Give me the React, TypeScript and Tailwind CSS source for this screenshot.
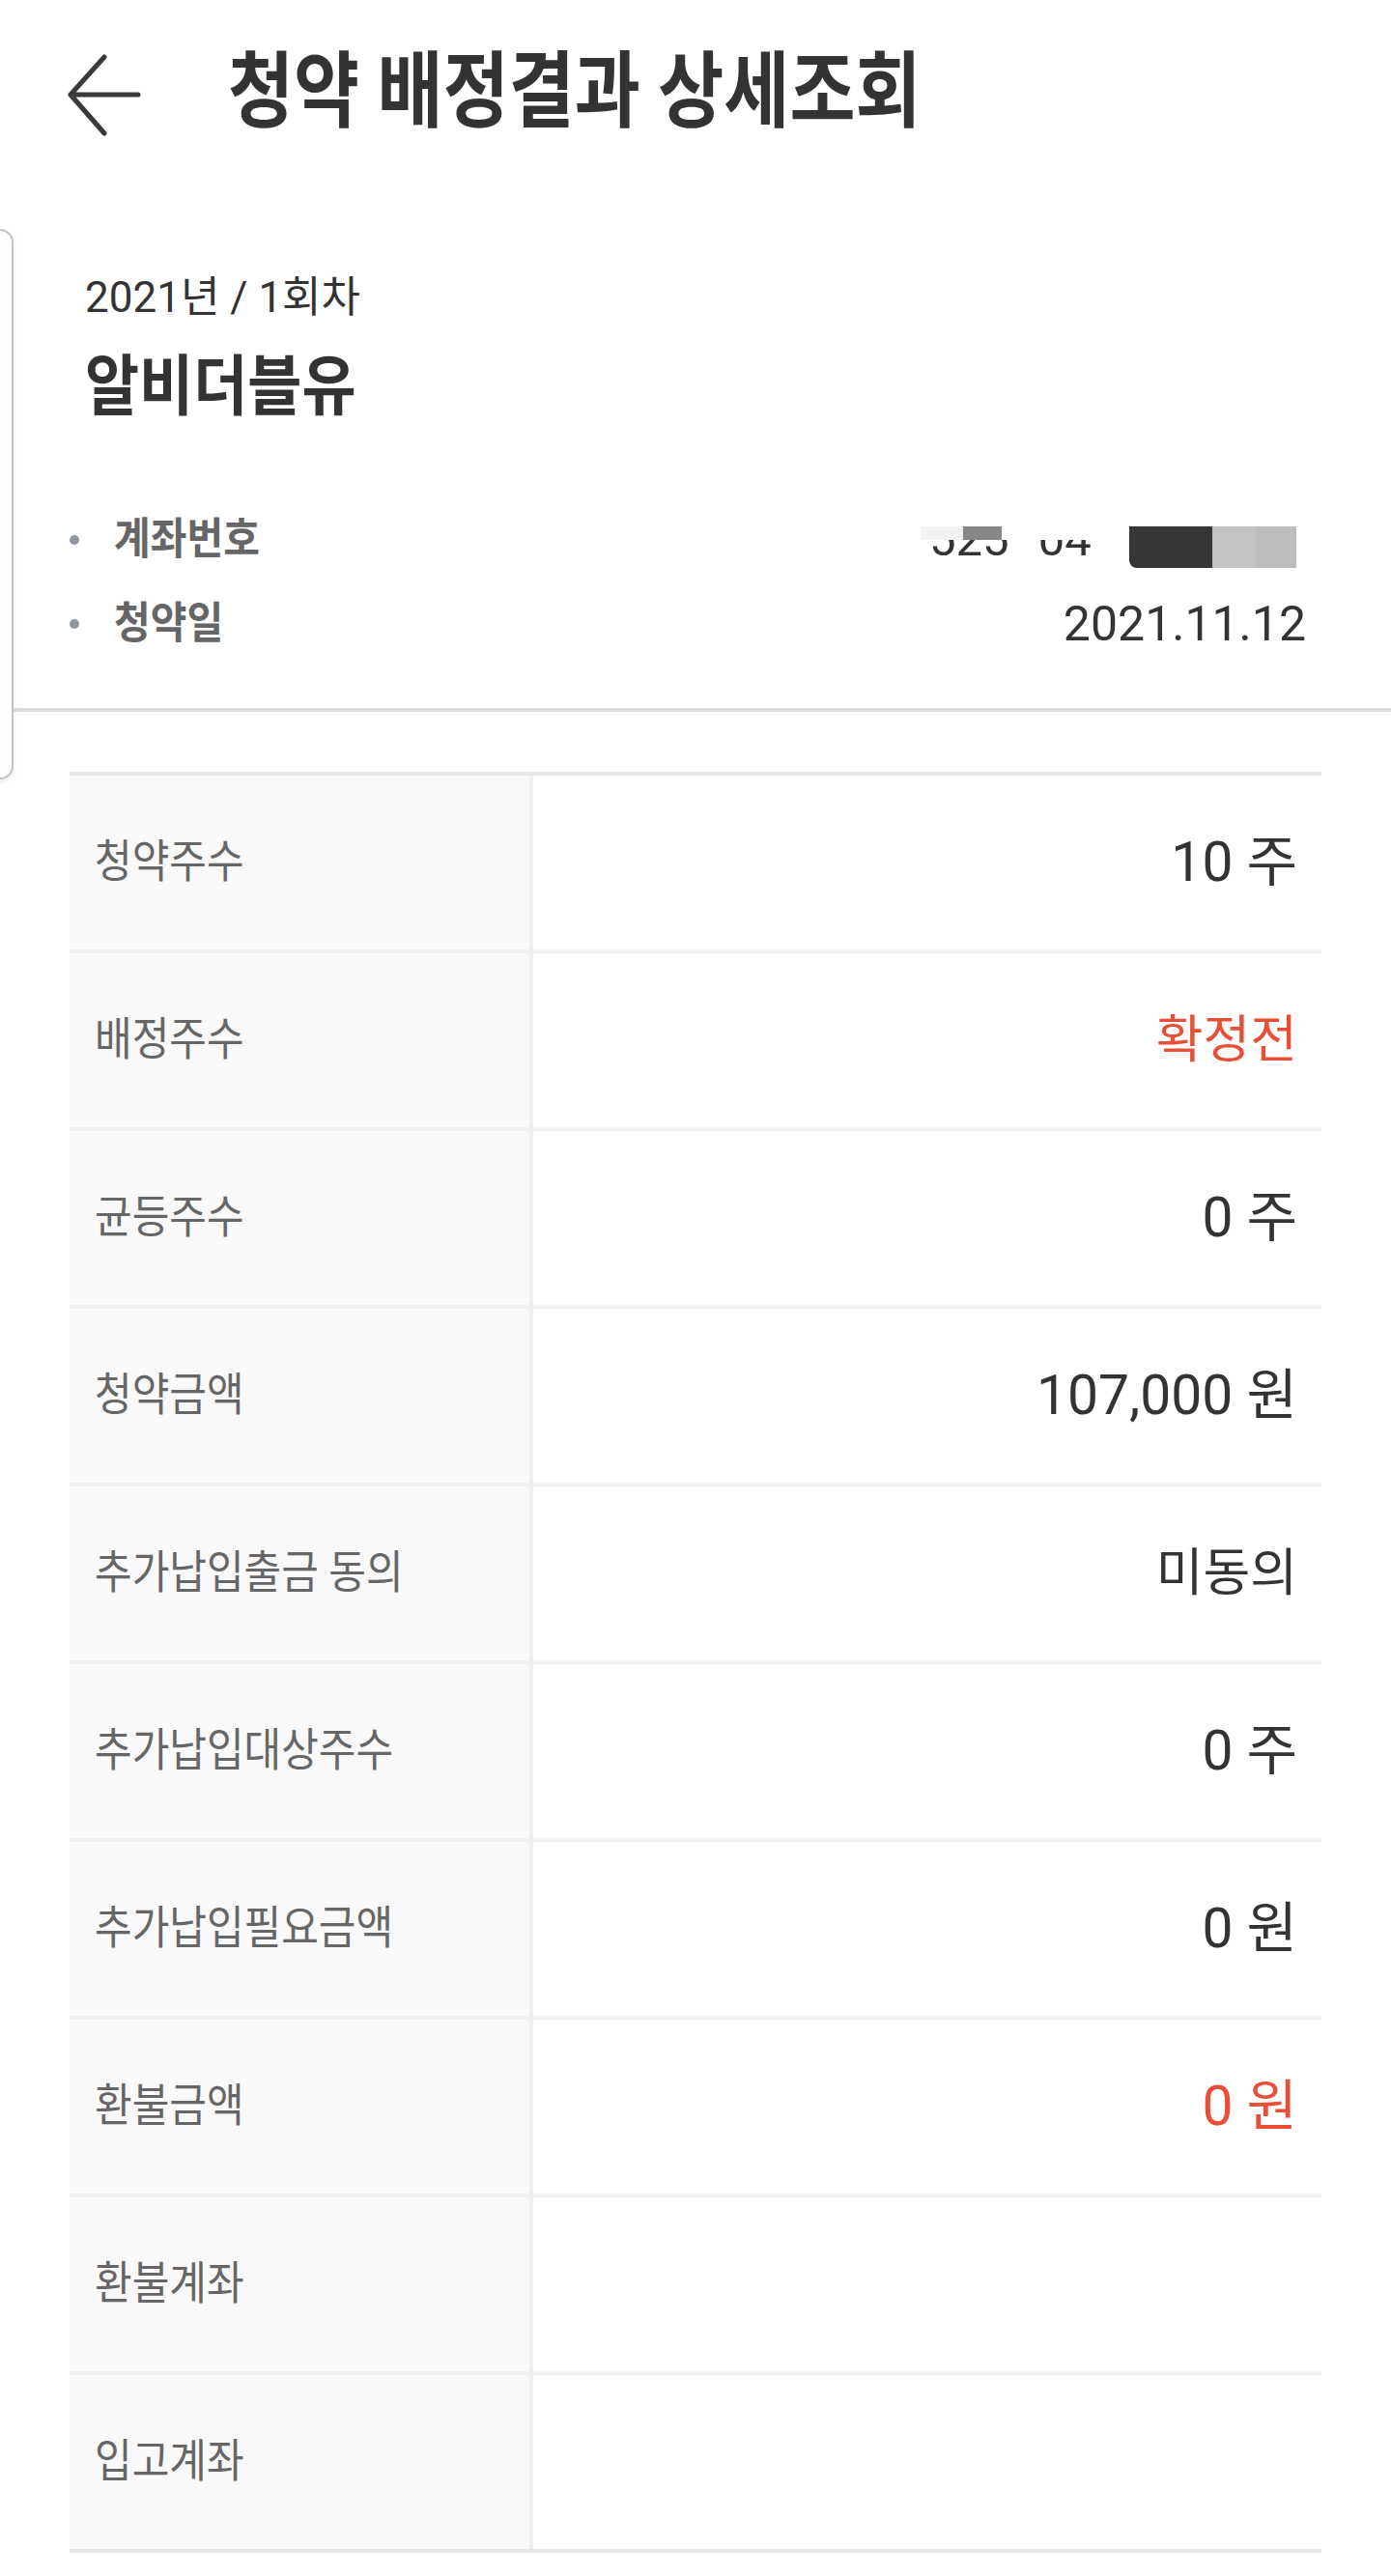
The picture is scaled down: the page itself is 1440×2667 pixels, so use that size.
import React from "react";

type Row = { label: string; value?: string; red?: boolean; hangul?: boolean };

const rows: Row[] = [
  { label: "청약주수", value: "10 주" },
  { label: "배정주수", value: "확정전", red: true, hangul: true },
  { label: "균등주수", value: "0 주" },
  { label: "청약금액", value: "107,000 원" },
  { label: "추가납입출금 동의", value: "미동의", hangul: true },
  { label: "추가납입대상주수", value: "0 주" },
  { label: "추가납입필요금액", value: "0 원" },
  { label: "환불금액", value: "0 원", red: true },
  { label: "환불계좌" },
  { label: "입고계좌" },
];

function MaskedAccount() {
  return (
    <div className="relative h-[48px] w-[400px] shrink-0">
      <div className="flex h-[48px] items-center pl-[10px] text-[49px] leading-[48px] text-[#333]">
        <span>525</span>
        <span className="ml-[30px]">04</span>
      </div>
      <div className="absolute left-0 top-0 h-[24px] w-[217px] bg-white" />
      <div className="absolute left-[1px] top-[10px] h-[14px] w-[44px] bg-[#f2f2f2]" />
      <div className="absolute left-[45px] top-[10px] h-[14px] w-[40px] bg-[#888888]" />
      <div className="absolute left-[217px] top-[10px] h-[43px] w-[86px] rounded-bl-[8px] bg-[#363636]" />
      <div className="absolute left-[303px] top-[10px] h-[43px] w-[45px] bg-[#c3c3c3]" />
      <div className="absolute left-[348px] top-[10px] h-[43px] w-[42px] bg-[#bdbdbd]" />
    </div>
  );
}

export default function App() {
  return (
    <div className="min-h-[2667px] w-[1440px] overflow-hidden bg-white font-['Roboto','Noto_Sans_CJK_KR',sans-serif] text-[#333]">
      <header className="flex h-[192px] items-center">
        <svg
          className="ml-[68px] shrink-0"
          width="80"
          height="90"
          viewBox="0 0 80 90"
          fill="none"
          stroke="#3a3a3a"
          strokeWidth="5"
          strokeLinecap="round"
          strokeLinejoin="round"
        >
          <path d="M40 8 L5 47 L40 87 M5 47 L75 47" />
        </svg>
        <h1 className="ml-[88px] inline-block scale-y-[1.16] text-[74px] font-bold leading-none text-[#333]">
          청약 배정결과 상세조회
        </h1>
      </header>

      <div className="mt-[45px] flex h-[562px]">
        <div className="-ml-[30px] h-[570px] w-[44px] shrink-0 rounded-[14px] border-2 border-[#c4c4c4] bg-[#fdfdfd] shadow-[0_2px_4px_rgba(0,0,0,0.08)]" />
        <div className="flex flex-1 flex-col">
          <div className="pl-[74px] pt-[46px]">
            <div className="text-[44px] leading-[50px] text-[#333]">2021년 / 1회차</div>
            <div className="mt-[32px] scale-y-[1.12] text-[61px] font-bold leading-[70px] text-[#333]">
              알비더블유
            </div>
          </div>
          <div className="mt-[100px] flex flex-col gap-[39px] pl-[58px] pr-[88px]">
            <div className="flex h-[48px] items-center">
              <span className="h-[10px] w-[10px] shrink-0 rounded-full bg-[#9097a0]" />
              <span className="ml-[36px] inline-block scale-y-[1.1] text-[41px] font-bold leading-[48px] text-[#666]">
                계좌번호
              </span>
              <div className="ml-auto">
                <MaskedAccount />
              </div>
            </div>
            <div className="flex h-[48px] items-center">
              <span className="h-[10px] w-[10px] shrink-0 rounded-full bg-[#9097a0]" />
              <span className="ml-[36px] inline-block scale-y-[1.1] text-[41px] font-bold leading-[48px] text-[#666]">
                청약일
              </span>
              <span className="ml-auto text-[50px] leading-[48px] text-[#333]">2021.11.12</span>
            </div>
          </div>
          <div className="mt-[63px] h-[4px] bg-[#d9dadc]" />
        </div>
      </div>

      <div className="mx-[72px] border-y-4 border-[#e6e6e6]">
        {rows.map((r, i) => (
          <div
            key={r.label}
            className={i === 0 ? "flex h-[180px]" : "flex h-[184px] border-t-4 border-[#f0f0f0]"}
          >
            <div className="flex w-[480px] shrink-0 items-center border-r-4 border-[#f0f0f0] bg-[#f9f9f9] pl-[26px]">
              <span className="inline-block scale-y-[1.1] text-[42px] leading-[48px] text-[#666]">{r.label}</span>
            </div>
            <div className="flex flex-1 items-center justify-end pr-[25px]">
              {r.value ? (
                <span
                  className={
                    (r.hangul ? "text-[53px] " : "text-[57px] ") +
                    (r.red ? "leading-[64px] text-[#e94e36]" : "leading-[64px] text-[#333]")
                  }
                >
                  {r.value}
                </span>
              ) : null}
            </div>
          </div>
        ))}
      </div>
    </div>
  );
}
